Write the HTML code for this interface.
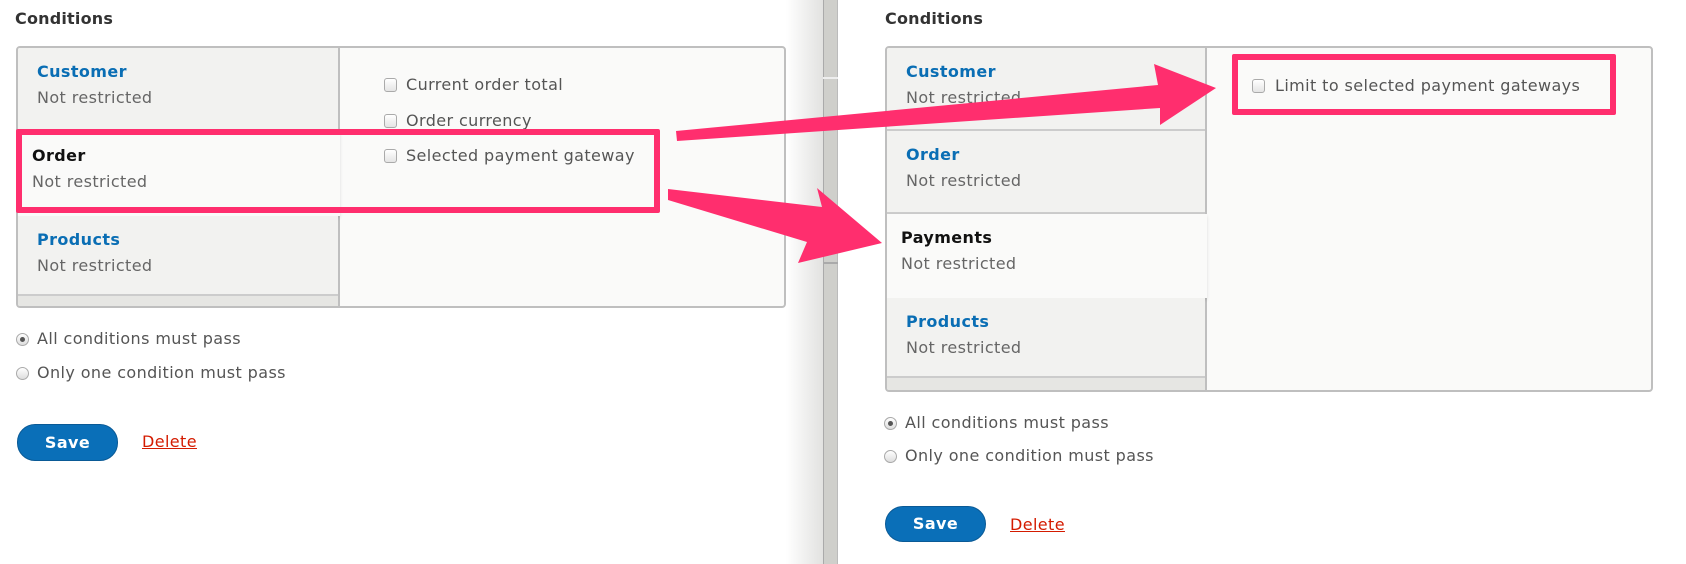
<!DOCTYPE html>
<html><head><meta charset="utf-8"><style>
*{margin:0;padding:0;box-sizing:border-box}
body{width:1686px;height:564px;background:#fff;position:relative;overflow:hidden;font-family:"DejaVu Sans","Liberation Sans",sans-serif;color:#555;font-size:16px;letter-spacing:0.4px}
.a{position:absolute;white-space:nowrap}
h3{position:absolute;font-size:16px;font-weight:bold;color:#333;letter-spacing:0.2px}
.box{position:absolute;border:2px solid #bfbfbf;border-radius:4px;background:#fafaf9;overflow:hidden}
.tabs{position:absolute;left:0;top:0;bottom:0;background:#e6e6e3;border-right:2px solid #bfbfbf}
.tab{position:absolute;left:0;right:0;background:#f2f2f0;border-bottom:2px solid #ccc}
.tab .t{position:absolute;left:19px;top:14px;font-weight:bold;color:#0a6eb4;font-size:16px}
.tab .s{position:absolute;left:19px;top:40px;color:#666;font-size:16px}
.tab.act{background:#fafaf9;right:-2px;border-bottom:none;box-shadow:0 2px 3px rgba(0,0,0,.12)}
.tab.act .t{color:#111;left:14px}
.tab.act .s{left:14px}
.cb{position:absolute;width:13px;height:14px;border:1px solid #aaa;border-radius:3px;background:linear-gradient(#fff,#e4e4e4)}
.rd{position:absolute;width:13px;height:13px;border:1px solid #aaa;border-radius:50%;background:linear-gradient(#fff,#ddd)}
.rd.on::after{content:"";position:absolute;left:3px;top:3px;width:5px;height:5px;border-radius:50%;background:#555}
.btn{position:absolute;background:#0a6fb8;border:1px solid #0a5a96;border-radius:18px;color:#fff;font-weight:bold;text-align:center;font-size:16px}
.del{position:absolute;color:#d41b00;text-decoration:underline;font-size:16px}
.pink{position:absolute;border:6px solid #ff2e6e;border-radius:2px}
</style></head><body>

<h3 style="left:15px;top:9px">Conditions</h3>
<div class="box" style="left:16px;top:46px;width:770px;height:262px">
 <div class="tabs" style="width:322px">
  <div class="tab" style="top:0;height:84px"><span class="t">Customer</span><span class="s">Not restricted</span></div>
  <div class="tab act" style="top:84px;height:84px"><span class="t">Order</span><span class="s">Not restricted</span></div>
  <div class="tab" style="top:168px;height:80px"><span class="t">Products</span><span class="s">Not restricted</span></div>
 </div>
</div>
<div class="cb" style="left:384px;top:78px"></div><span class="a" style="left:406px;top:75px">Current order total</span>
<div class="cb" style="left:384px;top:114px"></div><span class="a" style="left:406px;top:111px">Order currency</span>
<div class="pink" style="left:16px;top:129px;width:644px;height:84px"></div>
<div class="cb" style="left:384px;top:149px"></div><span class="a" style="left:406px;top:146px">Selected payment gateway</span>

<div class="rd on" style="left:16px;top:333px"></div><span class="a" style="left:37px;top:329px">All conditions must pass</span>
<div class="rd" style="left:16px;top:367px"></div><span class="a" style="left:37px;top:363px">Only one condition must pass</span>
<div class="btn" style="left:17px;top:424px;width:101px;height:37px;line-height:35px">Save</div>
<span class="del" style="left:142px;top:432px">Delete</span>

<div class="a" style="left:786px;top:0;width:37px;height:564px;background:linear-gradient(90deg,#fff,#e2e2e0)"></div>
<div class="a" style="left:823px;top:0;width:15px;height:564px;background:#cfcfcb;border-left:1px solid #aaa;border-right:1px solid #bbb"></div>
<div class="a" style="left:823px;top:77px;width:15px;height:2px;background:#eee"></div>
<div class="a" style="left:823px;top:262px;width:15px;height:2px;background:#aaa"></div>

<h3 style="left:885px;top:9px">Conditions</h3>
<div class="box" style="left:885px;top:46px;width:768px;height:346px">
 <div class="tabs" style="width:320px">
  <div class="tab" style="top:0;height:83px"><span class="t">Customer</span><span class="s">Not restricted</span></div>
  <div class="tab" style="top:83px;height:83px"><span class="t">Order</span><span class="s">Not restricted</span></div>
  <div class="tab act" style="top:166px;height:84px"><span class="t">Payments</span><span class="s">Not restricted</span></div>
  <div class="tab" style="top:250px;height:80px"><span class="t">Products</span><span class="s">Not restricted</span></div>
 </div>
</div>
<div class="pink" style="left:1232px;top:54px;width:384px;height:61px"></div>
<div class="cb" style="left:1252px;top:79px"></div><span class="a" style="left:1275px;top:76px">Limit to selected payment gateways</span>

<div class="rd on" style="left:884px;top:417px"></div><span class="a" style="left:905px;top:413px">All conditions must pass</span>
<div class="rd" style="left:884px;top:450px"></div><span class="a" style="left:905px;top:446px">Only one condition must pass</span>
<div class="btn" style="left:885px;top:506px;width:101px;height:36px;line-height:34px">Save</div>
<span class="del" style="left:1010px;top:515px">Delete</span>

<svg class="a" style="left:0;top:0" width="1686" height="564">
 <polygon fill="#ff2e6e" points="676,131 1158,85 1154,64 1216,88 1160,125 1160,108 677,141"/>
 <polygon fill="#ff2e6e" points="668,189 822,207 817,188 882,243 798,263 807,242 668,200"/>
</svg>
</body></html>
